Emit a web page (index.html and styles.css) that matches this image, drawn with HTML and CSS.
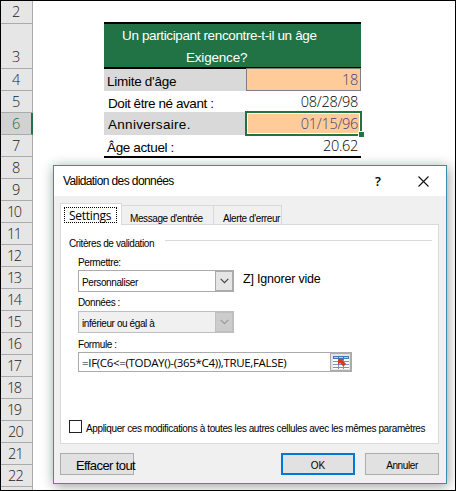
FILE: index.html
```html
<!DOCTYPE html>
<html lang="fr">
<head>
  <meta charset="UTF-8" />
  <meta name="viewport" content="width=device-width, initial-scale=1.0"/>
  <title>Validation des données</title>
  <link rel="stylesheet" href="styles.css">
</head>
<body>
  <div class="sheet">
    <div class="rows">
      <div class="one row-2">2</div>
      <div class="one row-3">3</div>
      <div class="one">4</div>
      <div class="one">5</div>
      <div class="one active">6</div>
      <div class="one">7</div>
      <div class="one">8</div>
      <div class="one">9</div>
      <div class="teen">10</div>
      <div class="teen">11</div>
      <div class="teen">12</div>
      <div class="teen">13</div>
      <div class="teen">14</div>
      <div class="teen">15</div>
      <div class="teen">16</div>
      <div class="teen">17</div>
      <div class="teen">18</div>
      <div class="teen">19</div>
      <div>20</div>
      <div>21</div>
      <div>22</div>
      <div class="last"></div>
    </div>

    <div class="data">
      <div class="heading">
        <span class="h1">Un participant rencontre-t-il un âge</span>
        <span class="h2">Exigence?</span>
      </div>
      <div class="line grey"><span class="name n1">Limite d'âge</span><span class="value input">18</span></div>
      <div class="line born"><span class="name n2">Doit être né avant :</span><span class="value">08/28/98</span></div>
      <div class="line grey birthday"><span class="name n3">Anniversaire.</span><span class="value selected">01/15/96<i class="handle"></i></span></div>
      <div class="line"><span class="name n4">Âge actuel :</span><span class="value">20.62</span></div>
    </div>

    <div class="dialog">
      <div class="titlebar">
        <span class="title">Validation des données</span>
        <span class="help">?</span>
        <svg class="close" width="11" height="11" viewBox="0 0 11 11"><path d="M.5 .5l10 10M10.500 .5l-10 10" stroke="#111" stroke-width="1.100" fill="none"/></svg>
      </div>

      <div class="tabs">
        <div class="tab current"><span>Settings</span></div>
        <div class="tab message">Message d'entrée</div>
        <div class="tab alert">Alerte d'erreur</div>
      </div>

      <div class="panel">
        <div class="legend"><span>Critères de validation</span></div>
        <div class="label l1">Permettre:</div>
        <div class="allow">
          <div class="select"><span>Personnaliser</span>
            <b><svg width="9" height="6" viewBox="0 0 9 6"><path d="M.7 .8l3.800 3.800L8.300 .8" stroke="#444" stroke-width="1.200" fill="none"/></svg></b>
          </div>
          <span class="ignore">Z] Ignorer vide</span>
        </div>
        <div class="label l2">Données :</div>
        <div class="select disabled"><span>inférieur ou égal à</span>
          <b><svg width="9" height="6" viewBox="0 0 9 6"><path d="M.7 .8l3.800 3.800L8.300 .8" stroke="#999" stroke-width="1.200" fill="none"/></svg></b>
        </div>
        <div class="label l3">Formule :</div>
        <div class="formula"><span>=IF(C6&lt;=(TODAY()-(365*C4)),TRUE,FALSE)</span>
          <b>
            <svg width="16" height="13" viewBox="0 0 16 13">
              <path fill="#fff" d="M0 0h16v13H0z"/>
              <path fill="#4474b8" d="M0 0h16v3H0z"/>
              <path fill="#b9cde8" d="M1 1h4v1H1zM6 1h4v1H6zM11 1h4v1h-4z"/>
              <path stroke="#6f94c8" fill="none" d="M0 5.500h16M0 8.500h16M0 11.500h16M5.500 3v10M10.500 3v10"/>
              <path fill="#cf3c25" d="M5 3h6L9.500 4.500l3.500 3.300L10.500 10.500 7 7 5 9z"/>
            </svg>
          </b>
        </div>
        <div class="apply"><i></i><span>Appliquer ces modifications à toutes les autres cellules avec les mêmes paramètres</span></div>
      </div>

      <div class="buttons">
        <div class="btn clear"><span>Effacer tout</span></div>
        <div class="btn ok"><span>OK</span></div>
        <div class="btn cancel"><span>Annuler</span></div>
      </div>
    </div>
  </div>
</body>
</html>
```

FILE: styles.css
```css
* {
  box-sizing: border-box;
}
body {
  margin: 0;
  font-family: "Liberation Sans", Arial, sans-serif;
  color: #000;
}
.sheet {
  position: relative;
  display: flex;
  width: 456px;
  height: 491px;
  border: 1px solid #000;
  background: #fff;
  overflow: hidden;
  white-space: nowrap;
}

/* row numbers */
.rows {
  width: 32px;
  flex: none;
  background: #e6e6e6;
  border-right: 1px solid #ababab;
  font-family: "Open Sans", sans-serif;
  font-weight: 300;
  font-size: 14.5px;
  letter-spacing: -0.7px;
  color: #222;
}
.rows div {
  height: 22px;
  line-height: 21px;
  padding-left: 7px;
  border-bottom: 1px solid #ababab;
}
.rows .one {
  padding-left: 11px;
}
.rows .teen {
  padding-left: 6px;
  letter-spacing: -1.5px;
}
.rows .row-2 {
  height: 23px;
}
.rows .row-3 {
  height: 45px;
  padding-top: 22px;
}
.rows .active {
  height: 22px;
  margin-right: -1px;
  background: #d2d2d2;
  color: #217346;
  border-right: 2px solid #217346;
}
.rows .last {
  border: 0;
}

/* cells */
.data {
  width: 257px;
  height: 136px;
  margin: 21px 0 0 71px;
  border-top: 2px solid #000;
  border-bottom: 2px solid #000;
  font-size: 13.5px;
}
.heading {
  display: flex;
  flex-direction: column;
  height: 45px;
  background: #217346;
  border-bottom: 2px solid #000;
  color: #fff;
  line-height: 22px;
  padding-top: 1px;
}
.heading .h1 {
  padding-left: 18px;
  letter-spacing: -0.37px;
}
.heading .h2 {
  padding-left: 82px;
  letter-spacing: -0.2px;
}
.line {
  display: flex;
  height: 22px;
  line-height: 25px;
}
.born {
  height: 21px;
}
.grey .name {
  background: #d9d9d9;
}
.name {
  width: 142px;
  padding-left: 4px;
}
.n1 {
  padding-left: 3px;
  letter-spacing: -0.27px;
}
.n2 {
  letter-spacing: -0.43px;
}
.n3 {
  letter-spacing: 0.3px;
}
.n4 {
  padding-left: 3px;
  letter-spacing: -0.36px;
}
.value {
  width: 115px;
  padding-right: 3px;
  text-align: right;
  font-family: "Open Sans", sans-serif;
  font-weight: 300;
  font-size: 14.5px;
  letter-spacing: -0.3px;
  line-height: 21px;
}
.input {
  height: 23px;
  margin-top: -1px;
  border: 1px solid #7f7f7f;
  background: #ffcc99;
  color: #3f3f76;
  padding-right: 2px;
}
.birthday {
  height: 23px;
}
.selected {
  position: relative;
  height: 25px;
  width: 117px;
  margin: -1px -1px 0 -1px;
  border: 2px solid #217346;
  box-shadow: inset 0 0 0 1px #fff;
  background: #ffcc99;
  color: #3f3f76;
  padding-right: 2px;
}
.handle {
  position: absolute;
  right: -4px;
  bottom: -3px;
  width: 6px;
  height: 6px;
  background: #217346;
  border: 1px solid #fff;
  border-width: 1px 0 0 1px;
}

/* dialog window */
.dialog {
  position: absolute;
  left: 52px;
  top: 164px;
  width: 394px;
  height: 319px;
  border: 1px solid #3c8dab;
  background: #f0f0f0;
  box-shadow: 1px 2px 12px rgba(0, 0, 0, 0.4);
  font-size: 10px;
  letter-spacing: -0.4px;
}
.titlebar {
  display: flex;
  align-items: center;
  height: 30px;
  padding-left: 9px;
  background: #fff;
}
.title {
  width: 312px;
  font-size: 12px;
  letter-spacing: -0.6px;
}
.help {
  width: 15px;
  font-family: "Open Sans", sans-serif;
  font-size: 13px;
  font-weight: 600;
}
.close {
  margin-left: 28px;
}
.tabs {
  display: flex;
  align-items: flex-end;
  height: 28px;
  padding-left: 6px;
}
.tab {
  height: 19px;
  border: 1px solid #d9d9d9;
  border-left: 0;
  border-bottom: 0;
  line-height: 25px;
}
.current {
  z-index: 1;
  width: 62px;
  height: 22px;
  margin-bottom: -1px;
  border-left: 1px solid #d9d9d9;
  background: #fff;
  padding: 3px 0 0 3px;
}
.current span {
  display: block;
  width: 53px;
  height: 16px;
  border: 1px dotted #000;
  padding-left: 4px;
  font-family: "Open Sans", sans-serif;
  font-size: 12px;
  letter-spacing: -0.3px;
  line-height: 15px;
}
.message {
  width: 92px;
  padding-left: 8px;
}
.alert {
  width: 68px;
  padding-left: 9px;
}
.panel {
  width: 379px;
  height: 220px;
  margin-left: 6px;
  border: 1px solid #d9d9d9;
  background: #fff;
  padding: 12px 6px 0 8px;
}
.legend {
  display: flex;
  height: 14px;
  line-height: 14px;
}
.legend span {
  width: 96px;
}
.legend::after {
  content: "";
  flex: 1;
  height: 1px;
  margin-top: 3px;
  background: #d9d9d9;
}
.label {
  padding-left: 9px;
  height: 12px;
  line-height: 12px;
}
.l1 {
  margin: 6px 0 1px;
}
.l2 {
  margin: 5px 0 2px;
}
.l3 {
  margin: 6px 0 1px;
}
.allow {
  display: flex;
}
.select,
.formula {
  display: flex;
  width: 156px;
  height: 22px;
  margin-left: 9px;
  border: 1px solid #ababab;
  line-height: 23px;
}
.select span,
.formula span {
  flex: 1;
  padding-left: 3px;
}
.select b {
  display: flex;
  align-items: center;
  justify-content: center;
  width: 18px;
  border: 1px solid #ababab;
  background: #e5e5e5;
}
.disabled {
  background: #f0f0f0;
  border-color: #bfbfbf;
}
.disabled b {
  background: #ccc;
  border-color: #bfbfbf;
}
.ignore {
  margin-left: 9px;
  font-size: 12.5px;
  letter-spacing: -0.2px;
  line-height: 18px;
}
.formula {
  width: 274px;
  height: 20px;
  font-family: "Open Sans", sans-serif;
  font-size: 11.5px;
  letter-spacing: -0.33px;
  line-height: 19px;
}
.formula b {
  display: flex;
  align-items: center;
  justify-content: center;
  width: 21px;
  border: 1px solid #ababab;
  background: #e5e5e5;
}
.apply {
  display: flex;
  margin-top: 48px;
}
.apply i {
  flex: none;
  width: 13px;
  height: 13px;
  border: 1px solid #222;
}
.apply span {
  padding-left: 4px;
  letter-spacing: -0.385px;
  line-height: 17px;
}
.buttons {
  display: flex;
  padding: 9px 0 0 6px;
}
.btn {
  width: 74px;
  height: 22px;
  border: 1px solid #adadad;
  background: #e1e1e1;
  text-align: center;
  line-height: 23px;
}
.clear {
  font-size: 13px;
  letter-spacing: -0.6px;
  text-align: left;
  padding-left: 15px;
}
.ok {
  margin-left: 147px;
  border: 2px solid #0078d7;
  letter-spacing: 0;
  line-height: 21px;
}
.cancel {
  margin-left: 10px;
}
```
